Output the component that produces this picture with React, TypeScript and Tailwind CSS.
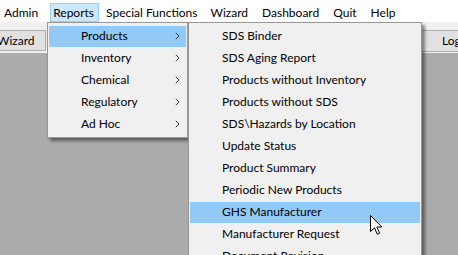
import React from "react";

const reportItems = ["Products", "Inventory", "Chemical", "Regulatory", "Ad Hoc"];
const productItems = [
  "SDS Binder",
  "SDS Aging Report",
  "Products without Inventory",
  "Products without SDS",
  "SDS\\Hazards by Location",
  "Update Status",
  "Product Summary",
  "Periodic New Products",
  "GHS Manufacturer",
  "Manufacturer Request",
  "Document Revision",
];

function Chevron() {
  return (
    <svg width="5" height="8" viewBox="0 0 5 8" className="ml-auto mr-[6px]">
      <polyline points="0.8,0.8 4,4 0.8,7.2" fill="none" stroke="#333" strokeWidth="1" />
    </svg>
  );
}

function Cursor() {
  return (
    <svg width="13" height="21" viewBox="0 0 13 21" className="absolute left-[370px] top-[215px]">
      <path
        d="M0.5 0.5 L0.5 16.5 L4.5 12.8 L7.3 19.3 L9.6 18.3 L6.9 12 L11.8 12 Z"
        fill="#fff"
        stroke="#000"
        strokeWidth="1"
      />
    </svg>
  );
}

export default function App() {
  return (
    <div className="relative w-[458px] h-[255px] overflow-hidden bg-[#ababab] text-[12px] text-black font-['Lato',sans-serif]">
      {/* menu bar */}
      <div className="flex h-[22px] items-start bg-white leading-none">
        <div className="flex h-[19px] mt-[3px] items-center pl-[4px] pr-[12px]">Admin</div>
        <div className="flex h-[19px] mt-[3px] items-center pl-[2px] pr-[4px] border border-[#99d1ff] bg-[#cce8ff]">Reports</div>
        <div className="flex h-[19px] mt-[3px] items-center pl-[7px] pr-[6px]">Special Functions</div>
        <div className="flex h-[19px] mt-[3px] items-center px-[7px]">Wizard</div>
        <div className="flex h-[19px] mt-[3px] items-center px-[7px]">Dashboard</div>
        <div className="flex h-[19px] mt-[3px] items-center px-[7px]">Quit</div>
        <div className="flex h-[19px] mt-[3px] items-center px-[7px]">Help</div>
      </div>

      {/* toolbar */}
      <div className="flex h-[31px] items-start justify-between bg-[#f0f0f0] pt-[8px]">
        <div className="ml-[-8px] flex h-[21px] w-[54px] items-center border border-[#adadad] bg-[#e1e1e1] pl-[4px]">
          Wizard
        </div>
        <div className="mr-[-30px] flex h-[22px] w-[76px] items-center border border-[#adadad] bg-[#e1e1e1] pl-[29px]">
          Logout
        </div>
      </div>

      {/* reports dropdown */}
      <div className="absolute left-[47px] top-[22px] w-[141px] border border-[#979797] bg-[#f0f0f0] py-[2px] shadow-[3px_3px_3px_rgba(0,0,0,0.45)]">
        {reportItems.map((r, i) => (
          <div key={r} className="flex h-[22px] items-center px-[1px]">
            <div className={"flex h-[21px] w-full items-center pl-[32px] " + (i === 0 ? "bg-[#91c9f7]" : "")}>
              {r}
              <Chevron />
            </div>
          </div>
        ))}
      </div>

      {/* products submenu */}
      <div className="absolute left-[188px] top-[22px] w-[234px] border border-[#979797] bg-[#f0f0f0] py-[2px] shadow-[3px_3px_3px_rgba(0,0,0,0.45)]">
        {productItems.map((p, i) => (
          <div key={p} className="flex h-[22px] items-center px-[1px]">
            <div className={"flex h-[21px] w-full items-center pl-[32px] " + (i === 8 ? "bg-[#91c9f7]" : "")}>
              {p}
            </div>
          </div>
        ))}
      </div>

      <Cursor />
    </div>
  );
}
